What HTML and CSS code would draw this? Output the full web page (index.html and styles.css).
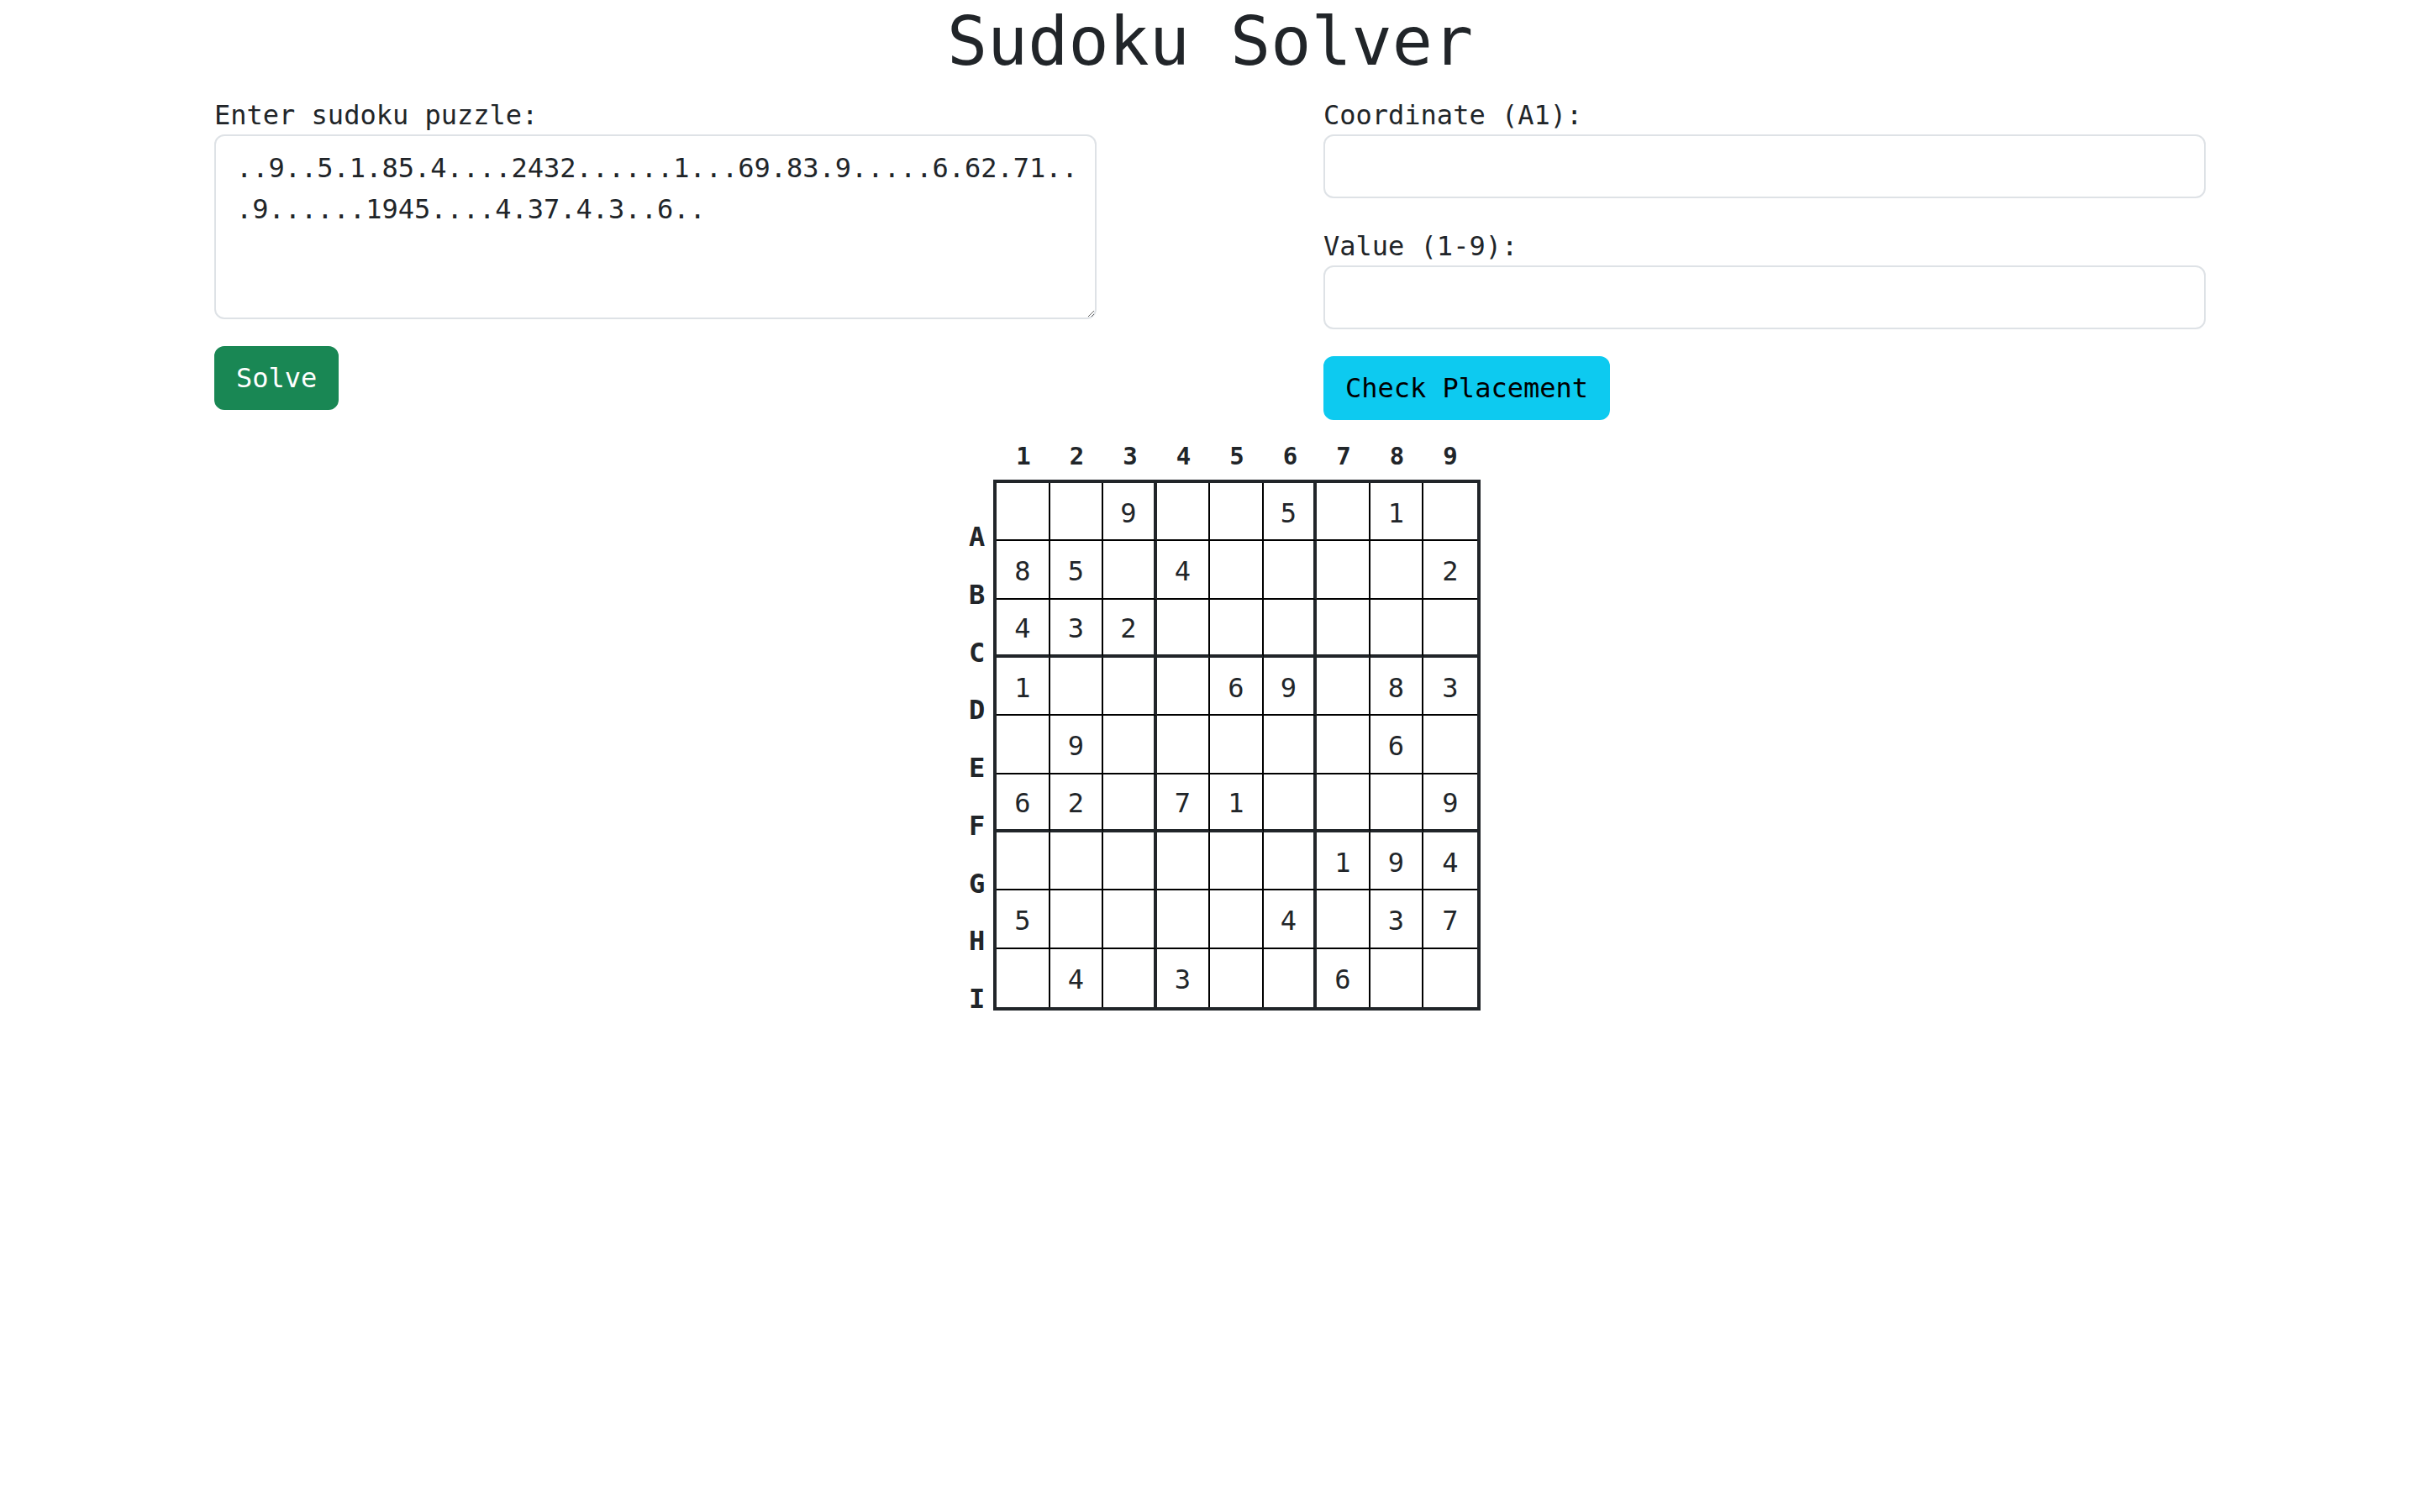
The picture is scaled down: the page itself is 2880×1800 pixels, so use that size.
FILE: index.html
```html
<!DOCTYPE html>
<html lang="en">
<head>
<meta charset="utf-8">
<title>Sudoku Solver</title>
<link rel="stylesheet" href="styles.css">
</head>
<body>
<h1 class="title">Sudoku Solver</h1>
<div class="form-row">
  <div class="col">
    <label class="label" for="puzzle">Enter sudoku puzzle:</label>
    <textarea id="puzzle" class="field area" rows="4">..9..5.1.85.4....2432......1...69.83.9.....6.62.71...9......1945....4.37.4.3..6..</textarea>
    <button class="btn btn-solve" type="button">Solve</button>
  </div>
  <div class="col">
    <div class="group">
      <label class="label" for="coord">Coordinate (A1):</label>
      <input id="coord" class="field input" type="text">
    </div>
    <div class="group">
      <label class="label" for="val">Value (1-9):</label>
      <input id="val" class="field input" type="text">
    </div>
    <button class="btn btn-check" type="button">Check Placement</button>
  </div>
</div>
<div class="board">
  <div class="corner"></div>
  <div class="col-labels">
    <span class="col-label">1</span><span class="col-label">2</span><span class="col-label">3</span><span class="col-label">4</span><span class="col-label">5</span><span class="col-label">6</span><span class="col-label">7</span><span class="col-label">8</span><span class="col-label">9</span>
  </div>
  <div class="row-labels">
    <span class="row-label">A</span><span class="row-label">B</span><span class="row-label">C</span><span class="row-label">D</span><span class="row-label">E</span><span class="row-label">F</span><span class="row-label">G</span><span class="row-label">H</span><span class="row-label">I</span>
  </div>
  <div class="grid">
    <div class="cell"></div><div class="cell"></div><div class="cell c3">9</div><div class="cell"></div><div class="cell"></div><div class="cell c3">5</div><div class="cell"></div><div class="cell">1</div><div class="cell c9"></div>
    <div class="cell">8</div><div class="cell">5</div><div class="cell c3"></div><div class="cell">4</div><div class="cell"></div><div class="cell c3"></div><div class="cell"></div><div class="cell"></div><div class="cell c9">2</div>
    <div class="cell r3">4</div><div class="cell r3">3</div><div class="cell r3 c3">2</div><div class="cell r3"></div><div class="cell r3"></div><div class="cell r3 c3"></div><div class="cell r3"></div><div class="cell r3"></div><div class="cell r3 c9"></div>
    <div class="cell">1</div><div class="cell"></div><div class="cell c3"></div><div class="cell"></div><div class="cell">6</div><div class="cell c3">9</div><div class="cell"></div><div class="cell">8</div><div class="cell c9">3</div>
    <div class="cell"></div><div class="cell">9</div><div class="cell c3"></div><div class="cell"></div><div class="cell"></div><div class="cell c3"></div><div class="cell"></div><div class="cell">6</div><div class="cell c9"></div>
    <div class="cell r3">6</div><div class="cell r3">2</div><div class="cell r3 c3"></div><div class="cell r3">7</div><div class="cell r3">1</div><div class="cell r3 c3"></div><div class="cell r3"></div><div class="cell r3"></div><div class="cell r3 c9">9</div>
    <div class="cell"></div><div class="cell"></div><div class="cell c3"></div><div class="cell"></div><div class="cell"></div><div class="cell c3"></div><div class="cell">1</div><div class="cell">9</div><div class="cell c9">4</div>
    <div class="cell">5</div><div class="cell"></div><div class="cell c3"></div><div class="cell"></div><div class="cell"></div><div class="cell c3">4</div><div class="cell"></div><div class="cell">3</div><div class="cell c9">7</div>
    <div class="cell r9"></div><div class="cell r9">4</div><div class="cell r9 c3"></div><div class="cell r9">3</div><div class="cell r9"></div><div class="cell r9 c3"></div><div class="cell r9">6</div><div class="cell r9"></div><div class="cell r9 c9"></div>
  </div>
</div>
</body>
</html>
```
FILE: styles.css
```css
html, body {
  margin: 0;
  padding: 0;
  background: #ffffff;
}

body {
  font-family: "DejaVu Sans Mono", "Liberation Mono", monospace;
  font-size: 32px;
  line-height: 48px;
  color: #212529;
}

.title {
  margin: 0 0 16px;
  padding-top: 3px;
  height: 93px;
  font-size: 80px;
  line-height: 93px;
  font-weight: 400;
  text-align: center;
}

.form-row {
  width: 2370px;
  margin: 0 auto;
  display: flex;
  justify-content: space-between;
  align-items: flex-start;
}

.col {
  width: 1050px;
  display: flex;
  flex-direction: column;
  align-items: flex-start;
}

.label {
  display: block;
  padding-top: 3px;
  line-height: 45px;
}

.group {
  width: 100%;
  margin-bottom: 32px;
}

.field {
  display: block;
  width: 100%;
  box-sizing: border-box;
  padding: 12px 20px 12px 24px;
  border: 2px solid #dee2e6;
  border-radius: 12px;
  background: #ffffff;
  font-family: inherit;
  font-size: 32px;
  line-height: 48px;
  color: #212529;
  margin: 0;
}

.area {
  height: 220px;
  padding-top: 14px;
  padding-bottom: 10px;
  line-height: 49px;
  resize: vertical;
}

.input {
  height: 76px;
}

.btn {
  margin-top: 32px;
  padding: 12px 24px;
  border: 2px solid transparent;
  border-radius: 12px;
  font-family: inherit;
  font-size: 32px;
  line-height: 48px;
  cursor: pointer;
}

.btn-solve {
  background: #198754;
  border-color: #198754;
  color: #ffffff;
}

.btn-check {
  margin-top: 0;
  background: #0dcaf0;
  border-color: #0dcaf0;
  color: #000000;
}

.board {
  display: grid;
  grid-template-columns: 64px auto;
  align-items: start;
  width: max-content;
  margin: 19px auto 0;
}

.col-labels {
  display: flex;
  padding-left: 4px;
  height: 52px;
}

.col-label {
  width: 63.5px;
  text-align: center;
  font-weight: 700;
  font-size: 29px;
  line-height: 48px;
}

.row-labels {
  display: flex;
  flex-direction: column;
  padding-top: 34px;
}

.row-label {
  height: 68.75px;
  line-height: 68.75px;
  text-align: right;
  padding-right: 10px;
  font-weight: 700;
  font-size: 32px;
}

.grid {
  display: grid;
  grid-template-columns: repeat(9, 63.5px);
  grid-auto-rows: 69.33px;
  border: 4px solid #212529;
  width: max-content;
}

.cell {
  box-sizing: border-box;
  border-right: 2px solid #000000;
  border-bottom: 2px solid #000000;
  display: flex;
  align-items: center;
  justify-content: center;
  font-size: 32px;
  padding-top: 4px;
}

.cell.c3 {
  border-right: 4px solid #212529;
}

.cell.c9 {
  border-right: 0;
}

.cell.r3 {
  border-bottom: 4px solid #212529;
}

.cell.r9 {
  border-bottom: 0;
}
```
